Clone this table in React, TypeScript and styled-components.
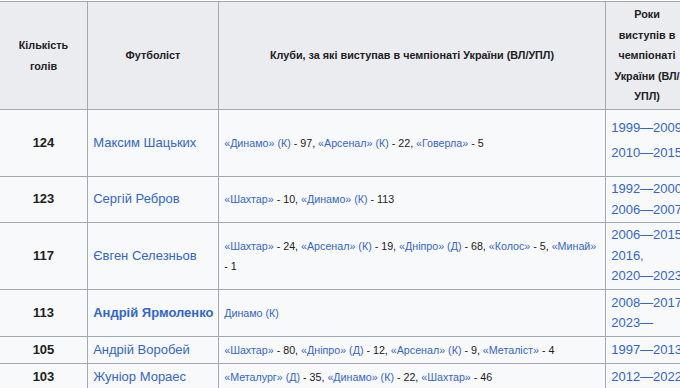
import * as React from "react"
import styled, { createGlobalStyle } from "styled-components"

const GlobalStyle = createGlobalStyle`
    html, body {
        margin: 0;
        padding: 0;
        background: #fff;
        overflow: hidden;
    }

    body {
        font-family: "Liberation Sans", Arial, sans-serif;
        color: #202122;
    }
`

const Table = styled.table`
    border-collapse: collapse;
    table-layout: fixed;
    width: 689px;
    margin: 1px 0 0 -1px;
    background: #f8f9fa;
    border: 1px solid #a2a9b1;
    font-size: 13px;
    line-height: 20.6px;
`

const Col = styled.col<{ $w: number }>`
    width: ${p => p.$w}px;
`

const Row = styled.tr<{ $h: number }>`
    height: ${p => p.$h}px;
`

const Head = styled.th`
    background: #eaecf0;
    border: 1px solid #a2a9b1;
    padding: 2px 5.2px;
    font-size: 10.8px;
    font-weight: bold;
    line-height: 20.6px;
    text-align: center;
    vertical-align: middle;
`

const Cell = styled.td`
    border: 1px solid #a2a9b1;
    padding: 2px 5.2px;
    vertical-align: middle;
`

const GoalsCell = styled(Cell)`
    text-align: center;
    font-weight: bold;
`

const NameCell = styled(Cell)`
    white-space: nowrap;
`

const ClubsCell = styled(Cell)`
    font-size: 10.7px;
    padding-right: 4px;
`

const YearsCell = styled(Cell)<{ $spaced?: boolean }>`
    white-space: nowrap;
    line-height: ${p => (p.$spaced ? "25px" : "20.6px")};
    padding-bottom: ${p => (p.$spaced ? "8px" : "2px")};
`

const Link = styled.a<{ $bold?: boolean }>`
    color: #3366cc;
    text-decoration: none;
    font-weight: ${p => (p.$bold ? "bold" : "normal")};
`

const Line = styled.div``

type Player = {
    goals: number
    name: string
    bold?: boolean
    clubs: [string, number][]
    plainClub?: string
    years: string[]
    height: number
    spaced?: boolean
}

const players: Player[] = [
    {
        goals: 124,
        name: "Максим Шацьких",
        clubs: [["«Динамо» (К)", 97], ["«Арсенал» (К)", 22], ["«Говерла»", 5]],
        years: ["1999—2009", "2010—2015"],
        height: 67,
        spaced: true,
    },
    {
        goals: 123,
        name: "Сергій Ребров",
        clubs: [["«Шахтар»", 10], ["«Динамо» (К)", 113]],
        years: ["1992—2000", "2006—2007"],
        height: 46,
    },
    {
        goals: 117,
        name: "Євген Селезньов",
        clubs: [["«Шахтар»", 24], ["«Арсенал» (К)", 19], ["«Дніпро» (Д)", 68], ["«Колос»", 5], ["«Минай»", 1]],
        years: ["2006—2015", "2016,", "2020—2023"],
        height: 67,
    },
    {
        goals: 113,
        name: "Андрій Ярмоленко",
        bold: true,
        clubs: [],
        plainClub: "Динамо (К)",
        years: ["2008—2017", "2023—"],
        height: 47,
    },
    {
        goals: 105,
        name: "Андрій Воробей",
        clubs: [["«Шахтар»", 80], ["«Дніпро» (Д)", 12], ["«Арсенал» (К)", 9], ["«Металіст»", 4]],
        years: ["1997—2013"],
        height: 27,
    },
    {
        goals: 103,
        name: "Жуніор Мораес",
        clubs: [["«Металург» (Д)", 35], ["«Динамо» (К)", 22], ["«Шахтар»", 46]],
        years: ["2012—2022"],
        height: 27,
    },
]

const Clubs: React.FunctionComponent<{ player: Player }> = ({ player }) => {
    if (player.plainClub) return <Link href="#">{player.plainClub}</Link>
    return (
        <>
            {player.clubs.map(([club, goals], i) => (
                <React.Fragment key={club}>
                    <Link href="#">{club}</Link> - {goals}
                    {i < player.clubs.length - 1 ? ", " : ""}
                </React.Fragment>
            ))}
        </>
    )
}

export default function App() {
    return (
        <>
            <GlobalStyle />
            <Table>
                <colgroup>
                    <Col $w={88} />
                    <Col $w={131} />
                    <Col $w={387} />
                    <Col $w={83} />
                </colgroup>
                <thead>
                    <Row $h={108}>
                        <Head>Кількість голів</Head>
                        <Head>Футболіст</Head>
                        <Head>Клуби, за які виступав в чемпіонаті України (ВЛ/УПЛ)</Head>
                        <Head>Роки виступів в чемпіонаті України (ВЛ/УПЛ)</Head>
                    </Row>
                </thead>
                <tbody>
                    {players.map(p => (
                        <Row key={p.goals} $h={p.height}>
                            <GoalsCell>{p.goals}</GoalsCell>
                            <NameCell>
                                <Link href="#" $bold={p.bold}>{p.name}</Link>
                            </NameCell>
                            <ClubsCell>
                                <Clubs player={p} />
                            </ClubsCell>
                            <YearsCell $spaced={p.spaced}>
                                {p.years.map(y => (
                                    <Line key={y}>
                                        <Link href="#">{y}</Link>
                                    </Line>
                                ))}
                            </YearsCell>
                        </Row>
                    ))}
                </tbody>
            </Table>
        </>
    )
}
